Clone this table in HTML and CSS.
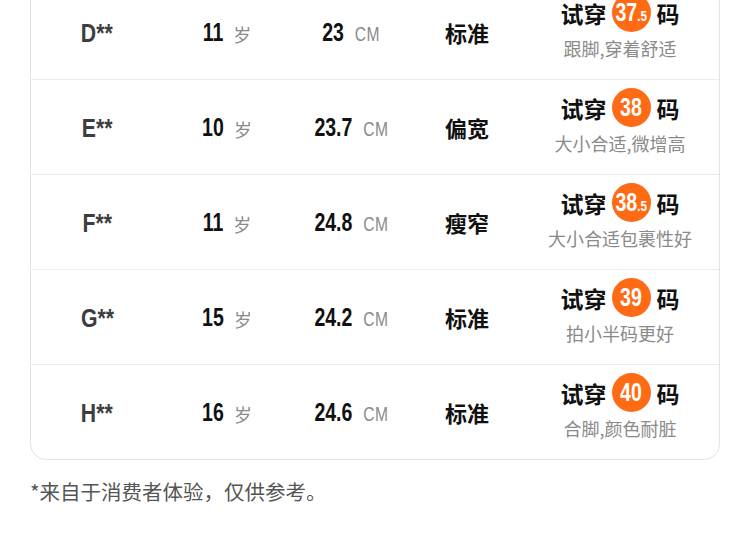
FILE: index.html
```html
<!DOCTYPE html>
<html>
<head>
  <title>试穿体验</title>
  <link rel="stylesheet" href="styles.css">
</head>
<body>
  <div class="page">
    <div class="card">
      <div class="row">
        <div class="name"><span class="narrow">D**</span></div>
        <div class="age"><span class="num narrow">11</span><span class="unit-cn">岁</span></div>
        <div class="len"><span class="narrow"><span class="num">23</span><span class="unit">CM</span></span></div>
        <div class="fit">标准</div>
        <div class="try">
          <div class="try-title">试穿<span class="badge"><span class="narrow">37<span class="dec">.5</span></span></span>码</div>
          <div class="try-note">跟脚,穿着舒适</div>
        </div>
      </div>
      <div class="row">
        <div class="name"><span class="narrow">E**</span></div>
        <div class="age"><span class="num narrow">10</span><span class="unit-cn">岁</span></div>
        <div class="len"><span class="narrow"><span class="num">23.7</span><span class="unit">CM</span></span></div>
        <div class="fit">偏宽</div>
        <div class="try">
          <div class="try-title">试穿<span class="badge"><span class="narrow">38</span></span>码</div>
          <div class="try-note">大小合适,微增高</div>
        </div>
      </div>
      <div class="row">
        <div class="name"><span class="narrow">F**</span></div>
        <div class="age"><span class="num narrow">11</span><span class="unit-cn">岁</span></div>
        <div class="len"><span class="narrow"><span class="num">24.8</span><span class="unit">CM</span></span></div>
        <div class="fit">瘦窄</div>
        <div class="try">
          <div class="try-title">试穿<span class="badge"><span class="narrow">38<span class="dec">.5</span></span></span>码</div>
          <div class="try-note">大小合适包裹性好</div>
        </div>
      </div>
      <div class="row">
        <div class="name"><span class="narrow">G**</span></div>
        <div class="age"><span class="num narrow">15</span><span class="unit-cn">岁</span></div>
        <div class="len"><span class="narrow"><span class="num">24.2</span><span class="unit">CM</span></span></div>
        <div class="fit">标准</div>
        <div class="try">
          <div class="try-title">试穿<span class="badge"><span class="narrow">39</span></span>码</div>
          <div class="try-note">拍小半码更好</div>
        </div>
      </div>
      <div class="row">
        <div class="name"><span class="narrow">H**</span></div>
        <div class="age"><span class="num narrow">16</span><span class="unit-cn">岁</span></div>
        <div class="len"><span class="narrow"><span class="num">24.6</span><span class="unit">CM</span></span></div>
        <div class="fit">标准</div>
        <div class="try">
          <div class="try-title">试穿<span class="badge"><span class="narrow">40</span></span>码</div>
          <div class="try-note">合脚,颜色耐脏</div>
        </div>
      </div>
    </div>
    <p class="footnote">*来自于消费者体验，仅供参考。</p>
  </div>
</body>
</html>
```

FILE: styles.css
```css
* {
  box-sizing: border-box;
}

body {
  margin: 0;
  background: #fff;
  font-family: "Noto Sans CJK SC", "Noto Sans", sans-serif;
  overflow: hidden;
}

.page {
  padding: 0 30px;
}

/* the page is scrolled: the top of the card is out of view */
.card {
  margin-top: -16px;
  border: 1px solid #e3e3e3;
  border-radius: 0 0 16px 16px;
  background: #fff;
}

.row {
  display: grid;
  grid-template-columns: 132px 126px 124px 108px 1fr;
  height: 95px;
  border-bottom: 1px solid #ececec;
}

.row:last-child {
  height: 94px;
  border-bottom: none;
}

.name,
.age,
.len,
.fit {
  display: flex;
  align-items: center;
  justify-content: center;
}

/* condensed figures: no narrow face is installed, so squeeze a sans */
.narrow {
  display: inline-block;
  font-family: "Liberation Sans", Arial, sans-serif;
  font-weight: 700;
  line-height: 1;
  transform: scaleX(0.78);
}

.name {
  font-size: 25px;
  color: #3d3d3d;
  padding-top: 2px;
}

.name .narrow {
  transform: scaleX(0.85);
}

.num {
  font-size: 25px;
  color: #111;
}

.age {
  padding-right: 4px;
}

.age .num {
  transform-origin: right center;
}

.unit-cn {
  font-size: 18px;
  color: #8a8a8a;
  margin-left: 10px;
  padding-top: 3px;
}

.unit {
  font-size: 20px;
  font-weight: 400;
  color: #8a8a8a;
  margin-left: 14px;
  letter-spacing: 0.5px;
}

.fit {
  font-size: 22px;
  font-weight: 700;
  color: #111;
}

.try {
  display: flex;
  flex-direction: column;
  align-items: center;
  padding-top: 8px;
}

.try-title {
  display: flex;
  align-items: center;
  height: 39px;
  font-size: 23px;
  font-weight: 700;
  color: #111;
}

.badge {
  display: flex;
  align-items: center;
  justify-content: center;
  width: 39px;
  height: 39px;
  margin: 0 6px 0 5px;
  border-radius: 50%;
  background: #ff6b14;
  color: #fff;
  font-size: 25px;
  white-space: nowrap;
}

.badge .dec {
  font-size: 15px;
}

.try-note {
  margin-top: 4px;
  font-size: 18px;
  line-height: 24px;
  color: #8a8a8a;
}

.footnote {
  margin: 16px 0 0;
  font-size: 20.5px;
  line-height: 30px;
  color: #555;
}
```
